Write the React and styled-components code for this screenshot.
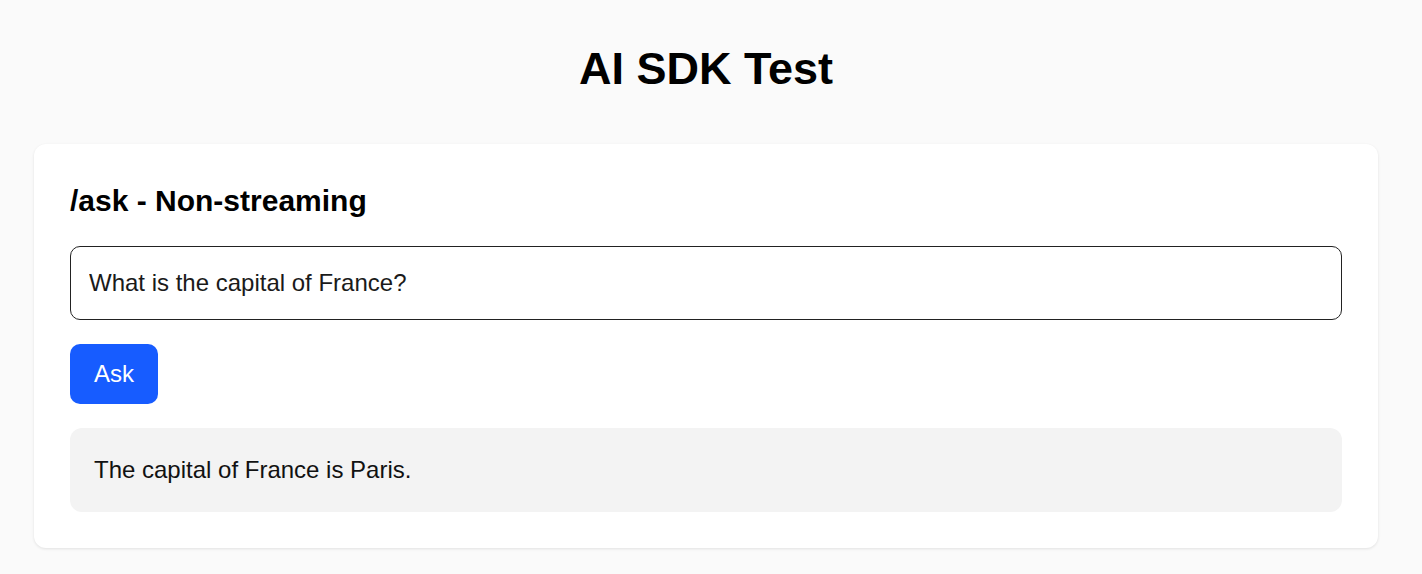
import React from "react";
import styled, { createGlobalStyle } from "styled-components";

const GlobalStyle = createGlobalStyle`
  html, body {
    margin: 0;
    padding: 0;
    background: #fafafa;
    font-family: "Liberation Sans", Arial, sans-serif;
    color: #000;
  }
`;

const Page = styled.div`
  padding: 0 44px 26px 34px;
  min-height: 574px;
  box-sizing: border-box;
`;

const Title = styled.h1`
  margin: 0;
  padding: 43px 0 0;
  height: 144px;
  box-sizing: border-box;
  text-align: center;
  font-size: 45px;
  font-weight: 700;
  line-height: 52px;
`;

const Card = styled.section`
  background: #fff;
  border-radius: 12px;
  box-shadow: 0 1px 3px rgba(0, 0, 0, 0.1);
  padding: 36px;
  display: flex;
  flex-direction: column;
  gap: 24px;
`;

const Heading = styled.h2`
  margin: 0;
  font-size: 30px;
  font-weight: 700;
  line-height: 42px;
  height: 42px;
`;

const Input = styled.input`
  box-sizing: border-box;
  width: 100%;
  height: 74px;
  padding: 0 18px;
  border: 1px solid #222;
  border-radius: 10px;
  font-family: inherit;
  font-size: 24px;
  color: #1a1a1a;
  background: #fff;
  outline: none;
`;

const Button = styled.button`
  align-self: flex-start;
  width: 88px;
  height: 60px;
  border: none;
  border-radius: 10px;
  background: #175cff;
  color: #fff;
  font-family: inherit;
  font-size: 24px;
  cursor: pointer;
`;

const Output = styled.div`
  background: #f3f3f3;
  border-radius: 12px;
  padding: 0 24px;
  height: 84px;
  display: flex;
  align-items: center;
  font-size: 24px;
  color: #111;
`;

export default function App() {
  return (
    <Page>
      <GlobalStyle />
      <Title>AI SDK Test</Title>
      <Card>
        <Heading>/ask - Non-streaming</Heading>
        <Input defaultValue="What is the capital of France?" />
        <Button>Ask</Button>
        <Output>The capital of France is Paris.</Output>
      </Card>
    </Page>
  );
}
